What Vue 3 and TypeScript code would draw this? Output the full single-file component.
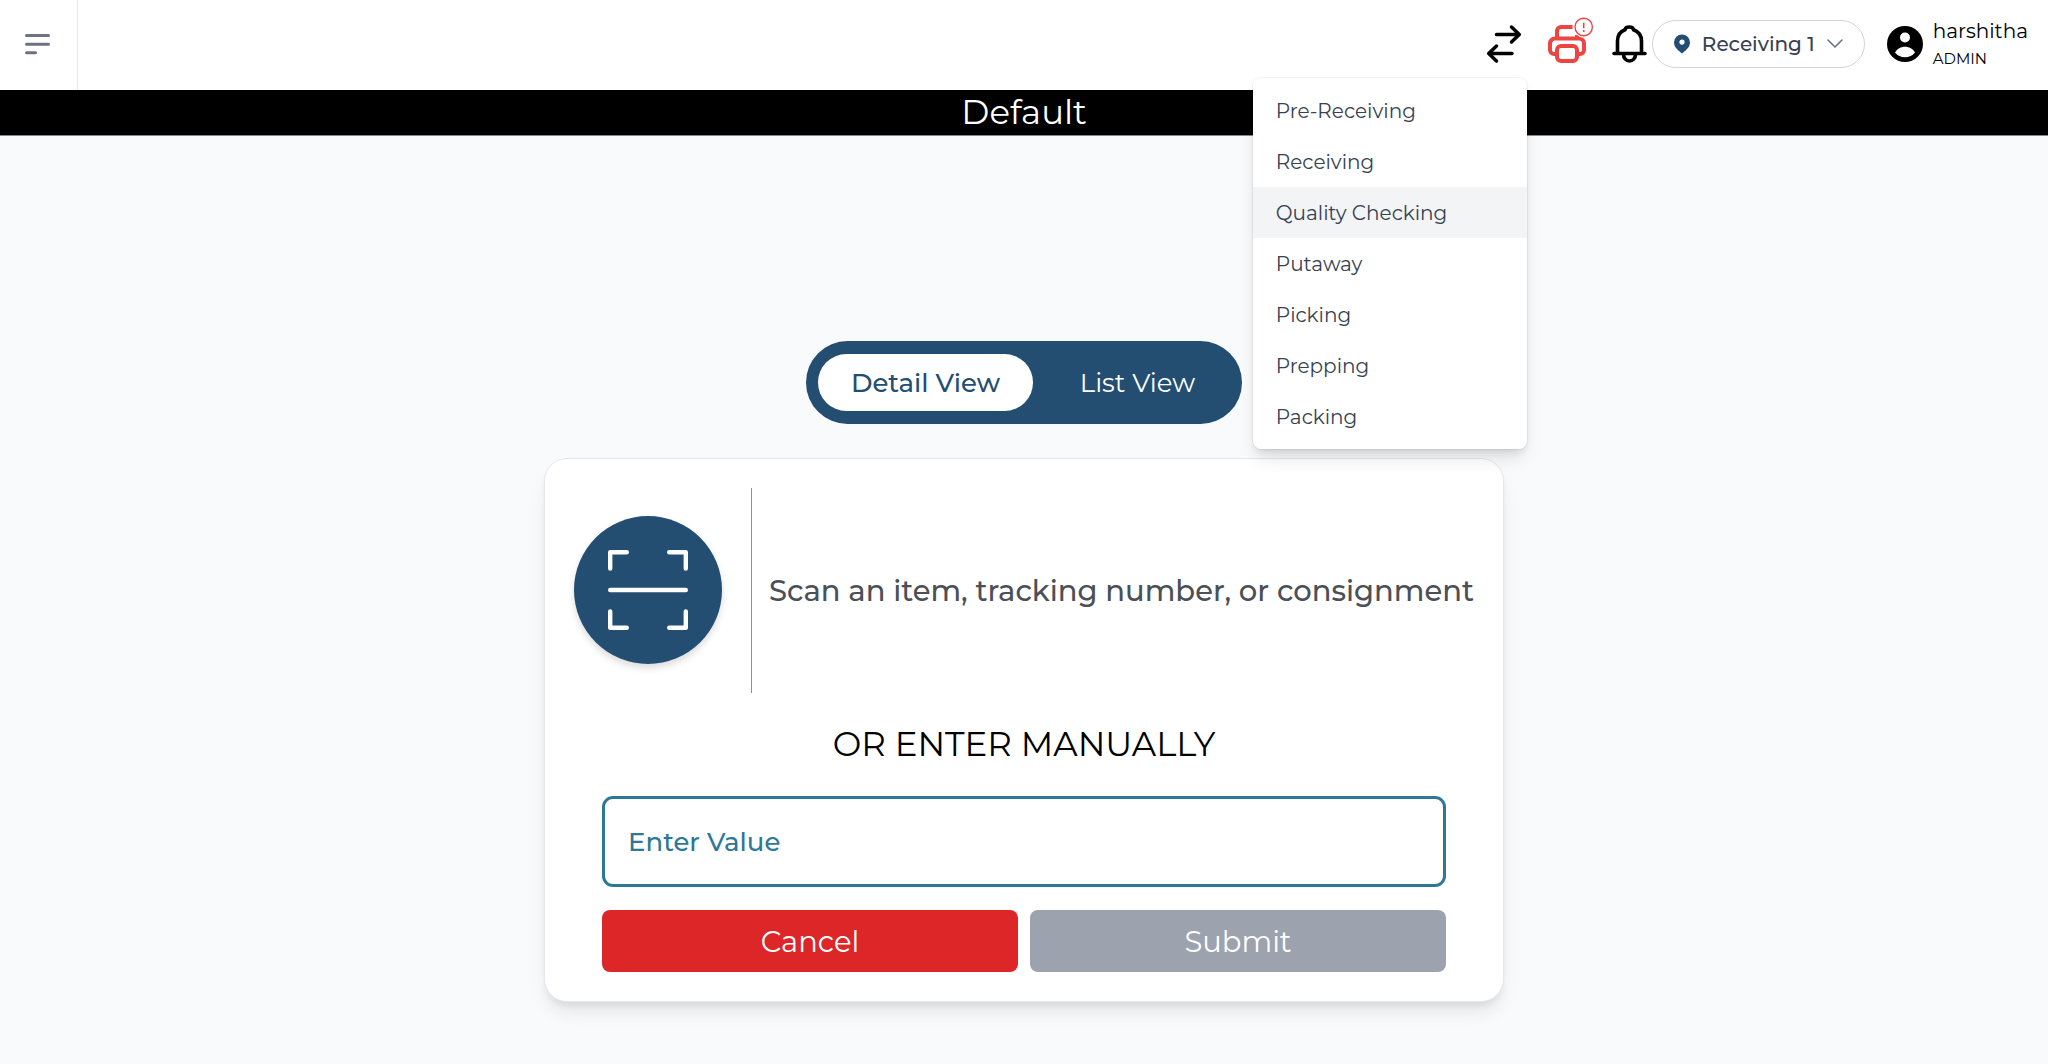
<script setup lang="ts">
import { ref } from 'vue'

type View = 'detail' | 'list'

const stages: string[] = [
  'Pre-Receiving',
  'Receiving',
  'Quality Checking',
  'Putaway',
  'Picking',
  'Prepping',
  'Packing',
]
const activeStage = ref('Quality Checking')
const menuOpen = ref(true)
const view = ref<View>('detail')
const value = ref('')
</script>

<template>
  <div class="page">
    <header class="topbar">
      <button class="menu-toggle" type="button" aria-label="Open navigation">
        <svg width="28" height="22" viewBox="0 0 28 22" fill="none" stroke="#6b7280" stroke-width="3" stroke-linecap="round">
          <path d="M2.5 2.5H24.500M2.500 11.200H24.500M2.500 19.700H11.500" />
        </svg>
      </button>

      <div class="actions">
        <div class="stage-picker">
          <button class="icon-button" type="button" aria-label="Switch stage" @click="menuOpen = !menuOpen">
            <svg width="46" height="46" viewBox="0 -1 46 46" fill="none" stroke="#000" stroke-width="3.500" stroke-linecap="round" stroke-linejoin="round">
              <path d="M15.500 12.500H38M30.500 5l7.800 7.500l-7.800 7.500M31 31.500H8M15.500 24L7.700 31.500l7.800 7.500" />
            </svg>
          </button>
          <ul v-if="menuOpen" class="stage-menu">
            <li v-for="stage in stages" :key="stage">
              <button
                type="button"
                class="stage-item"
                :class="{ active: stage === activeStage }"
                @click="activeStage = stage"
              >{{ stage }}</button>
            </li>
          </ul>
        </div>

        <button class="icon-button" type="button" aria-label="Printer not connected">
          <svg class="overflowing" width="46" height="46" viewBox="0 -1 46 46" fill="none" stroke="#ef4444" stroke-width="4" stroke-linejoin="round">
            <path d="M13 16V9a4 4 0 0 1 4-4H28.500M33 13v3" />
            <path d="M11 32H10a4 4 0 0 1-4-4V21.500a5 5 0 0 1 5-5H35a5 5 0 0 1 5 5V28a4 4 0 0 1-4 4H34" />
            <rect x="13" y="24" width="20" height="15" rx="4" fill="#fff" />
            <circle cx="39.700" cy="5" r="10.600" fill="#fff" stroke="none" />
            <circle cx="39.700" cy="5" r="8.700" stroke-width="1.400" />
            <path d="M39.700 0.800v5.400M39.700 8v2" stroke-width="1.600" />
          </svg>
        </button>

        <button class="icon-button" type="button" aria-label="Notifications">
          <svg width="46" height="46" viewBox="0 -1 46 46" fill="none" stroke="#000" stroke-width="3.600" stroke-linecap="round" stroke-linejoin="round">
            <path d="M8 31.500H39M11.500 31V19c0-6 3-9.500 7.500-11.200C19.500 4 27 4 27.500 7.800C32 9.500 35.500 13 35.500 19V31M17.500 32.500a6 6.500 0 0 0 12 0" />
          </svg>
        </button>

        <button class="station" type="button">
          <svg width="16" height="20" viewBox="0 0 16 20">
            <path fill="#234e72" fill-rule="evenodd" d="M8 0.500a8 8 0 0 0-8 8c0 5 4.800 8.300 8 11c3.200-2.700 8-6 8-11a8 8 0 0 0-8-8ZM8 5.500a2.600 2.600 0 1 1 0 5.200a2.600 2.600 0 0 1 0-5.200Z" />
          </svg>
          <span>Receiving 1</span>
          <svg width="16" height="10" viewBox="0 0 16 10" fill="none" stroke="#6b7280" stroke-width="1.600" stroke-linecap="round" stroke-linejoin="round">
            <path d="M1 1l7 7l7-7" />
          </svg>
        </button>

        <div class="user">
          <svg width="36" height="36" viewBox="0 0 36 36">
            <circle cx="18" cy="18" r="18" />
            <circle cx="18" cy="11.500" r="5" fill="#fff" />
            <path d="M8 26.500c2-3.700 6-5.800 10-5.800s8 2.100 10 5.800a12.800 12.800 0 0 1-20 0Z" fill="#fff" />
          </svg>
          <div class="user-text">
            <span class="user-name">harshitha</span>
            <span class="user-role">ADMIN</span>
          </div>
        </div>
      </div>
    </header>

    <div class="banner">Default</div>

    <main class="content">
      <div class="view-switch">
        <button type="button" class="view-detail" :class="{ selected: view === 'detail' }" @click="view = 'detail'">Detail View</button>
        <button type="button" class="view-list" :class="{ selected: view === 'list' }" @click="view = 'list'">List View</button>
      </div>

      <section class="card">
        <div class="scan">
          <div class="scan-side">
            <div class="scan-badge">
              <svg width="80" height="80" viewBox="0 0 80 80" fill="none" stroke="#fff" stroke-width="4.400" stroke-linecap="round" stroke-linejoin="round">
                <path d="M2.200 18.500V2.200H18.800M61.200 2.200H77.800V18.500M2.200 61.500V77.800H18.800M61.200 77.800H77.800V61.500M2.200 40H77.800" />
              </svg>
            </div>
          </div>
          <p class="scan-text">Scan an item, tracking number, or consignment</p>
        </div>

        <h2 class="manual-title">OR ENTER MANUALLY</h2>

        <form class="manual" @submit.prevent>
          <input v-model="value" type="text" placeholder="Enter Value" aria-label="Enter Value" />
          <div class="buttons">
            <button type="button" class="cancel" @click="value = ''">Cancel</button>
            <button type="submit" class="submit">Submit</button>
          </div>
        </form>
      </section>
    </main>
  </div>
</template>

<style>
body {
  margin: 0;
  background: #f9fafc;
}
</style>

<style scoped>
* {
  box-sizing: border-box;
}

.page {
  min-height: 100vh;
  background: #f9fafc;
  font-family: Montserrat, Inter, sans-serif;
  color: #000;
}

button,
input {
  font-family: inherit;
  margin: 0;
}

button {
  border: 0;
  padding: 0;
  background: none;
  cursor: pointer;
}

svg {
  display: block;
  flex: none;
}

.topbar {
  display: flex;
  justify-content: space-between;
  height: 90px;
  background: #fff;
}

.menu-toggle {
  display: flex;
  align-items: center;
  justify-content: center;
  width: 78px;
  padding: 0 2px 2px 0;
  border-right: 1px solid #e5e7eb;
}

.actions {
  display: flex;
  align-items: center;
  padding: 0 20px 2px 0;
}

.stage-picker {
  position: relative;
}

.icon-button {
  display: block;
  width: 46px;
  height: 46px;
  margin-right: 16px;
}

.stage-picker .icon-button {
  margin-right: 17px;
}

.actions > .icon-button + .icon-button {
  margin-right: 0;
}

.overflowing {
  overflow: visible;
}

.stage-menu {
  position: absolute;
  z-index: 2;
  top: 57px;
  right: 17px;
  width: 274px;
  margin: 0;
  padding: 7px 0;
  list-style: none;
  background: #fff;
  border-radius: 8px;
  box-shadow: 0 0 0 1px rgba(0, 0, 0, 0.05), 0 12px 18px -4px rgba(0, 0, 0, 0.12), 0 5px 7px -2px rgba(0, 0, 0, 0.08);
}

.stage-item {
  display: block;
  width: 100%;
  height: 51px;
  padding: 0 23px;
  font-size: 20px;
  text-align: left;
  color: #374151;
}

.stage-item.active {
  background: #f3f4f6;
}

.station {
  display: flex;
  align-items: center;
  justify-content: space-between;
  min-width: 213px;
  height: 48px;
  padding: 0 21px;
  border: 1px solid #d1d5db;
  border-radius: 24px;
  font-size: 20px;
  font-weight: 500;
  color: #374151;
}

.user {
  display: flex;
  align-items: center;
  gap: 10px;
  margin-left: 22px;
}

.user-text {
  display: flex;
  flex-direction: column;
  min-width: 95px;
}

.user-name {
  font-size: 20px;
  line-height: 30px;
}

.user-role {
  font-size: 15px;
  line-height: 26px;
}

.banner {
  line-height: 45px;
  font-size: 34px;
  text-align: center;
  color: #fff;
  background: #000;
  border-bottom: 1px solid #86888a;
}

.content {
  display: flex;
  flex-direction: column;
  align-items: center;
  padding: 205px 24px 60px;
}

.view-switch {
  display: flex;
  gap: 12px;
  padding: 13px 12px;
  border-radius: 42px;
  background: #234e72;
}

.view-switch button {
  height: 57px;
  border-radius: 29px;
  font-size: 26px;
  color: #fff;
}

.view-switch .view-detail {
  width: 215px;
}

.view-switch .view-list {
  width: 185px;
}

.view-switch .selected {
  background: #fff;
  color: #234e72;
  font-weight: 500;
}

.card {
  width: 100%;
  max-width: 960px;
  margin-top: 34px;
  padding: 29px;
  border: 1px solid #e5e7eb;
  border-radius: 23px;
  background: #fff;
  box-shadow: 0 12px 18px -4px rgba(0, 0, 0, 0.1), 0 5px 7px -2px rgba(0, 0, 0, 0.06);
}

.scan {
  display: flex;
  align-items: center;
}

.scan-side {
  padding: 28px 29px 29px 0;
  border-right: 1px solid #8a909e;
}

.scan-badge {
  display: flex;
  align-items: center;
  justify-content: center;
  width: 148px;
  height: 148px;
  border-radius: 50%;
  background: #234e72;
  box-shadow: 0 4px 7px rgba(0, 0, 0, 0.14);
}

.scan-text {
  flex: 1;
  margin: 0;
  text-align: right;
  font-size: 29px;
  font-weight: 500;
  color: #4b5056;
}

.manual-title {
  margin: 31px 0;
  font-size: 34px;
  line-height: 41px;
  font-weight: 400;
  text-align: center;
}

.manual {
  display: flex;
  flex-direction: column;
  gap: 23px;
  padding: 0 28px;
}

.manual input {
  width: 100%;
  height: 91px;
  padding: 0 23px;
  border: 3px solid #2c7896;
  border-radius: 11px;
  background: #fff;
  font-size: 26px;
  font-weight: 500;
  color: #2c7896;
  outline: none;
}

.manual input::placeholder {
  color: #2c7896;
  opacity: 1;
}

.buttons {
  display: flex;
  gap: 12px;
}

.buttons button {
  flex: 1;
  height: 62px;
  border-radius: 8px;
  font-size: 29px;
  color: #fff;
}

.cancel {
  background: #dc2628;
}

.submit {
  background: #9ca3af;
}
</style>
